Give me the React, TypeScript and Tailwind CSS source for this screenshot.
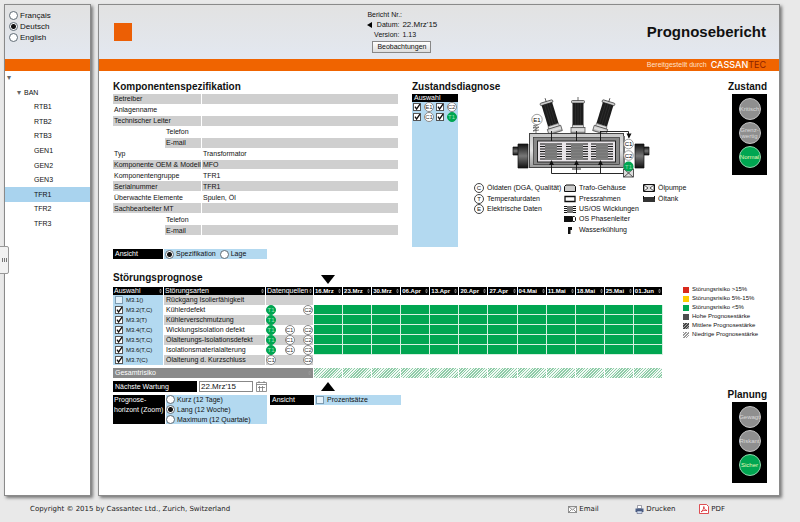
import type { ReactNode } from 'react'

const specRows = [
  { label: 'Betreiber', value: '' },
  { label: 'Anlagenname', value: '' },
  { label: 'Technischer Leiter', value: '' },
  { label: 'Telefon', value: '', sub: true },
  { label: 'E-mail', value: '', sub: true },
  { label: 'Typ', value: 'Transformator' },
  { label: 'Komponente OEM & Modell', value: 'MFO' },
  { label: 'Komponentengruppe', value: 'TFR1' },
  { label: 'Serialnummer', value: 'TFR1' },
  { label: 'Überwachte Elemente', value: 'Spulen, Öl' },
  { label: 'Sachbearbeiter MT', value: '' },
  { label: 'Telefon', value: '', sub: true },
  { label: 'E-mail', value: '', sub: true },
]

const faults = [
  { id: 'M3.1()', name: 'Rückgang Isolierfähigkeit', sources: ['', '', ''], checked: false, green: false },
  { id: 'M3.2(T,C)', name: 'Kühlerdefekt', sources: ['T1', '', 'C2'], checked: true, green: true },
  { id: 'M3.3(T)', name: 'Kühlerverschmutzung', sources: ['T1', '', ''], checked: true, green: true },
  { id: 'M3.4(T,C)', name: 'Wicklungsisolation defekt', sources: ['T1', 'C1', 'C2'], checked: true, green: true },
  { id: 'M3.5(T,C)', name: 'Ölalterungs-Isolationsdefekt', sources: ['T1', 'C1', 'C2'], checked: true, green: true },
  { id: 'M3.6(T,C)', name: 'Isolationsmaterialalterung', sources: ['T1', 'C1', 'C2'], checked: true, green: true },
  { id: 'M3.7(C)', name: 'Ölalterung d. Kurzschluss', sources: ['C1', '', 'C2'], checked: true, green: false },
]

const weeks = ['16.Mrz', '23.Mrz', '30.Mrz', '06.Apr', '13.Apr', '20.Apr', '27.Apr', '04.Mai', '11.Mai', '18.Mai', '25.Mai', '01.Jun']

const riskLegend = [
  { label: 'Störungsrisiko >15%', swatch: 'bg-[#d9291c]' },
  { label: 'Störungsrisiko 5%-15%', swatch: 'bg-[#fc0]' },
  { label: 'Störungsrisiko <5%', swatch: 'bg-[#00a651]' },
  { label: 'Hohe Prognosestärke', swatch: 'bg-[#4d4d4f]' },
  { label: 'Mittlere Prognosestärke', swatch: 'bg-[repeating-linear-gradient(135deg,#444_0_1px,#aaa_1px_2px)]' },
  { label: 'Niedrige Prognosestärke', swatch: 'bg-[repeating-linear-gradient(135deg,#999_0_1px,#fff_1px_2px)]' },
]

const components = ['RTB1', 'RTB2', 'RTB3', 'GEN1', 'GEN2', 'GEN3', 'TFR1', 'TFR2', 'TFR3']

function Check({ label, checked, children }: { label?: string; checked?: boolean; children?: ReactNode }) {
  return (
    <label className="flex items-center gap-[3px] whitespace-nowrap">
      <span className="relative block size-2">
        <input
          type="checkbox"
          aria-label={label}
          defaultChecked={checked}
          className="peer block size-2 appearance-none border border-[#7d9bb0] bg-[#e4f2fb] checked:border-[#555] checked:bg-white"
        />
        <svg viewBox="0 0 8 8" className="pointer-events-none absolute inset-0 hidden size-2 peer-checked:block">
          <path d="M2 3.6 3.6 6 7 1.2" fill="none" stroke="#111" strokeWidth="1.3" />
        </svg>
      </span>
      {children}
    </label>
  )
}

function Radio({ name, label, checked }: { name: string; label: string; checked?: boolean }) {
  return (
    <label className="flex items-center gap-[2px] whitespace-nowrap">
      <input
        type="radio"
        name={name}
        defaultChecked={checked}
        className="block size-[9px] shrink-0 appearance-none rounded-full border border-[#5f6b75] bg-white checked:bg-[radial-gradient(circle,#111_0_2px,#fff_3px)]"
      />
      {label}
    </label>
  )
}

function Source({ code }: { code: string }) {
  if (!code) return <span className="size-[10px]" />
  const tone = code.startsWith('T') ? 'border-[#00a651] bg-[#00a651] text-[#9be0b8]' : 'border-[#888] bg-white text-[#333]'
  return (
    <span className={`flex size-[10px] items-center justify-center rounded-full border text-[6px] leading-none ${tone}`}>
      {code}
    </span>
  )
}

function SortIcon() {
  return (
    <svg viewBox="0 0 4 6" className="h-[6px] w-[3px] shrink-0 fill-[#999]">
      <path d="M0 2.4 2 0l2 2.4zM0 3.6h4L2 6z" />
    </svg>
  )
}

function SortHead({ children }: { children: ReactNode }) {
  return (
    <th className="h-2 border-r border-white bg-black p-0 font-normal text-white">
      <button type="button" className="flex h-2 w-full items-center justify-between px-px leading-[8px] whitespace-nowrap">
        {children}
        <SortIcon />
      </button>
    </th>
  )
}

function TrafficLight({ title, lamps }: { title: string; lamps: string[] }) {
  return (
    <section className="flex flex-col items-end">
      <h2 className="text-[10px] leading-[14px] font-bold">{title}</h2>
      <div className="flex h-[81px] w-[35px] flex-col items-center gap-[2px] bg-black pt-1">
        {lamps.map((lamp, i) => (
          <div
            key={lamp}
            className={`flex size-[22px] items-center justify-center rounded-full border text-center text-[6px] leading-[6px] whitespace-pre-line ${
              i === 2 ? 'border-[#8fd6ac] bg-[#00a651] text-[#e4f8b8]' : 'border-[#c4c4c4] bg-[#8f8f8f] text-[#dadada]'
            }`}
          >
            {lamp}
          </div>
        ))}
      </div>
    </section>
  )
}

function Bushing({ transform }: { transform: string }) {
  return (
    <g transform={transform}>
      <path d="M0-27v6" stroke="#444" strokeWidth=".8" />
      <rect x="-6.5" y="-23.5" width="13" height="2.6" rx="1" fill="#ccc" stroke="#333" strokeWidth=".7" />
      <rect x="-5.5" y="-21" width="11" height="22" fill="#1c1c1c" />
      <path d="M-2.5-21v22M0-21v22M2.5-21v22" stroke="#383838" strokeWidth=".5" />
      <rect x="-5.5" y="1" width="11" height="3" fill="#ddd" stroke="#444" strokeWidth=".6" />
      <rect x="-7" y="3.5" width="14" height="5.5" fill="url(#metal)" stroke="#444" strokeWidth=".7" />
    </g>
  )
}

function Winding({ x }: { x: number }) {
  return (
    <g>
      <rect x={x} y="52.5" width="24" height="18.5" fill="#e8e4e8" />
      {[54, 56.5, 59, 61.5, 64, 66.5, 69].map((y) => (
        <path key={y} d={`M${x + 1} ${y}h22`} stroke="#1a1a1a" strokeWidth="1.1" />
      ))}
      <rect x={x + 6} y="53" width="12" height="17" fill="#808080" />
      {[55, 58, 61, 64, 67].map((y) => (
        <path key={y} d={`M${x + 6} ${y}h12`} stroke="#666" strokeWidth=".6" />
      ))}
    </g>
  )
}

function TransformerDrawing() {
  return (
    <svg viewBox="0 4 150 86" width="150" height="86" className="block" fontFamily="Liberation Sans, sans-serif" fontSize="6">
      <defs>
        <linearGradient id="metal" x1="0" x2="0" y1="0" y2="1">
          <stop offset="0" stopColor="#c8c8c8" />
          <stop offset=".5" stopColor="#e2e2e2" />
          <stop offset="1" stopColor="#9a9a9a" />
        </linearGradient>
        <linearGradient id="wheel" x1="0" x2="0" y1="0" y2="1">
          <stop offset="0" stopColor="#111" />
          <stop offset=".5" stopColor="#777" />
          <stop offset="1" stopColor="#111" />
        </linearGradient>
      </defs>
      <path d="M8 57h6v8H8zM136 57h8v8h-8z" fill="url(#wheel)" stroke="#111" strokeWidth=".7" />
      <path d="M13 54h10v24H13zM130 54h9v24h-9z" fill="url(#wheel)" stroke="#111" strokeWidth=".7" />
      <Bushing transform="translate(48 34) rotate(-17)" />
      <Bushing transform="translate(73 34)" />
      <Bushing transform="translate(97 34) rotate(17)" />
      <rect x="24.5" y="43.5" width="94" height="34" fill="url(#metal)" stroke="#444" />
      <rect x="28.5" y="47.5" width="86" height="27" fill="#888" stroke="#333" strokeWidth=".7" />
      <rect x="32.5" y="51" width="78" height="21" fill="#e8e4e8" stroke="#222" />
      <Winding x={34} />
      <Winding x={60} />
      <Winding x={85} />
      <path d="M46.5 41v10M71.5 41v10M95.5 41v10M95.5 41.5h28v6M46.5 72v11.5H119M71.5 72v11.5M95.5 72v11.5M67 79h9" fill="none" stroke="#111" strokeWidth=".9" />
      <path d="m46.5 70-2.5 5h5zM71.5 70l-2.5 5h5zM95.5 70l-2.5 5h5zM124 48.5l-2.5-5h5z" fill="#111" />
      <path d="M119 46v32" stroke="#777" strokeWidth="2" />
      <path d="m28 36 6-2-6 4 6-1-6 4 6-1M31 38v6" fill="none" stroke="#444" strokeWidth=".7" />
      <rect x="118.5" y="79" width="10" height="8" fill="#ddd" stroke="#333" strokeWidth=".8" />
      <path d="m119 79 9 8M128 79l-9 8" stroke="#333" strokeWidth=".8" />
      <g textAnchor="middle">
        <g fill="#fff" stroke="#777" strokeWidth=".7">
          <circle cx="32" cy="29.5" r="5.2" />
          <circle cx="123.5" cy="54" r="4.8" />
          <circle cx="123.5" cy="65.5" r="4.8" />
        </g>
        <circle cx="123.5" cy="76.5" r="5" fill="#00a651" />
        <text x="32" y="31.7">E1</text>
        <text x="123.5" y="56">C1</text>
        <text x="123.5" y="67.5">C2</text>
        <text x="123.5" y="78.5" fill="#8fd6ac">T1</text>
      </g>
    </svg>
  )
}

function LetterMark({ letter }: { letter: string }) {
  return (
    <span className="flex size-[10px] items-center justify-center rounded-full border border-[#444] text-[6px] leading-none">{letter}</span>
  )
}

function Symbol({ children }: { children: ReactNode }) {
  return (
    <svg viewBox="0 0 12 8" className="h-2 w-3" fill="none" stroke="#111">
      {children}
    </svg>
  )
}

function DiagramLegend() {
  const items: [string, ReactNode, string][] = [
    ['col-start-1 row-start-1', <LetterMark letter="C" />, 'Öldaten (DGA, Qualität)'],
    ['col-start-1 row-start-2', <LetterMark letter="T" />, 'Temperaturdaten'],
    ['col-start-1 row-start-3', <LetterMark letter="E" />, 'Elektrische Daten'],
    ['col-start-2 row-start-1', <Symbol><path d="M.5 7.5V2.5L2 1h8l1.5 1.5v5z" fill="#ccc" /></Symbol>, 'Trafo-Gehäuse'],
    ['col-start-2 row-start-2', <Symbol><path d="M1 1.5h10v5H1z" strokeWidth="1.3" /></Symbol>, 'Pressrahmen'],
    ['col-start-2 row-start-3', <Symbol><path d="M0 1.5h12M0 3.5h12M0 5.5h12M0 7.5h12" /><path d="M3 1h6v7H3z" fill="#777" stroke="none" /></Symbol>, 'US/OS Wicklungen'],
    ['col-start-2 row-start-4', <Symbol><path d="M0 1h8v6H0z" fill="#111" stroke="none" /><path d="M8.5 1.5h2l1 1v3l-1 1h-2z" /></Symbol>, 'OS Phasenleiter'],
    ['col-start-2 row-start-5', <Symbol><path d="M4 1h4v3H6.5v4H4z" fill="#111" stroke="none" /></Symbol>, 'Wasserkühlung'],
    ['col-start-3 row-start-1', <Symbol><path d="M.5.5h11v7H.5z" fill="#ddd" /><path d="m1 1 4 3-4 3zM11 1 7 4l4 3z" fill="#fff" strokeWidth=".7" /></Symbol>, 'Ölpumpe'],
    ['col-start-3 row-start-2', <Symbol><path d="M0 2h12v5H0z" fill="#333" stroke="none" /><path d="M.5 1v3M11.5 1v3" /></Symbol>, 'Öltank'],
  ]
  return (
    <ul className="mt-[3px] grid h-[52px] grid-cols-[90px_79px_auto] grid-rows-5 items-center justify-start">
      {items.map(([place, icon, label]) => (
        <li key={label} className={`flex items-center gap-[3px] leading-[10px] whitespace-nowrap ${place}`}>
          {icon}
          {label}
        </li>
      ))}
    </ul>
  )
}

function Sidebar() {
  return (
    <aside className="relative w-[87px] shrink-0 border border-[#8a8a8a] bg-white shadow-[2px_2px_3px_#777]">
      <fieldset className="flex h-[54px] flex-col gap-[2px] bg-linear-to-b from-[#e2e2e2] to-[#e3e8f0] pt-[6px] pl-[4px] text-[8px] leading-[9px]">
        <Radio name="lang" label="Français" />
        <Radio name="lang" label="Deutsch" checked />
        <Radio name="lang" label="English" />
      </fieldset>
      <div className="h-3 bg-[#f06400]" />
      <ul className="grid h-[160px] auto-rows-fr items-stretch text-[7px] leading-[10px]">
        <li className="flex items-center pl-[2px] text-[8px] text-[#666]">▾</li>
        <li className="flex items-center gap-[3px] pl-[12px]">
          <span className="text-[8px] text-[#666]">▾</span>BAN
        </li>
        {components.map((name) => (
          <li key={name} className={`flex ${name === 'TFR1' ? 'bg-[#a9d3ee]' : ''}`}>
            <a href={`#${name}`} className="flex w-full items-center pl-[29px]">{name}</a>
          </li>
        ))}
      </ul>
      <button
        type="button"
        aria-label="Navigation einklappen"
        className="absolute top-[241px] -left-[6px] flex h-7 w-[10px] items-center justify-center gap-px rounded-r-xs border border-[#999] bg-[#f2f2f2]"
      >
        <span className="h-1 w-px bg-[#777]" />
        <span className="h-1 w-px bg-[#777]" />
        <span className="h-1 w-px bg-[#777]" />
      </button>
    </aside>
  )
}

function ReportHeader() {
  return (
    <header>
      <div className="flex h-[54px] justify-between bg-linear-to-b from-[#e2e2e2] to-[#e3e8f0] pr-[13px] pl-[15px]">
        <div className="mt-[18px] size-[18px] bg-[#ec5f05]" />
        <div className="ml-10 w-[84px] pt-[5px]">
          <dl className="grid grid-cols-[32px_auto] gap-x-[3px] leading-[10px] whitespace-nowrap">
            <dt className="text-right">Bericht Nr.:</dt>
            <dd />
            <dt className="flex items-center justify-between">
              <button type="button" aria-label="Vorheriger Bericht">
                <svg viewBox="0 0 5 6" className="h-[6px] w-[5px]"><path d="M5 0v6L0 3z" /></svg>
              </button>
              Datum:
            </dt>
            <dd className="text-[8px]">22.Mrz'15</dd>
            <dt className="text-right">Version:</dt>
            <dd>1.13</dd>
          </dl>
          <button type="button" className="mt-px ml-[5px] h-[12px] w-[59px] border border-[#888] bg-linear-to-b from-white to-[#ddd] leading-[10px]">
            Beobachtungen
          </button>
        </div>
        <h1 className="mt-[18px] text-[15px] leading-[18px] font-bold">Prognosebericht</h1>
      </div>
      <div className="flex h-3 items-center justify-end gap-1 bg-[#f06400] pr-[13px] text-white">
        <span className="text-[#ffe0c8]">Bereitgestellt durch</span>
        <span className="font-[Inter] text-[9px] leading-[10px] font-medium">
          CASSAN<span className="font-normal text-[#8c2300]">TEC</span>
        </span>
      </div>
    </header>
  )
}

function SpecSection() {
  return (
    <section className="w-[285px]">
      <h2 className="text-[10px] leading-[14px] font-bold">Komponentenspezifikation</h2>
      <table className="h-[142px] w-full table-fixed border-separate border-spacing-0">
        <colgroup>
          <col className="w-[52px]" />
          <col className="w-[36px]" />
          <col />
        </colgroup>
        <tbody>
          {specRows.map((row, i) => {
            const cell = `border-b border-white p-0 pl-px text-left font-normal whitespace-nowrap leading-[9px] ${i % 2 === 0 ? 'bg-[#cfcfcf]' : ''}`
            return (
              <tr key={i}>
                {row.sub && <td />}
                <th scope="row" colSpan={row.sub ? 1 : 2} className={cell}>{row.label}</th>
                <td className={`border-l ${cell}`}>{row.value}</td>
              </tr>
            )
          })}
        </tbody>
      </table>
      <fieldset className="mt-[13px] flex h-[10px] w-[154px] gap-px leading-[10px]">
        <div className="w-[50px] bg-black pl-[2px] text-white">Ansicht</div>
        <div className="flex flex-1 items-center gap-1 bg-[#b3d9f0] pl-px">
          <Radio name="view" label="Spezifikation" checked />
          <Radio name="view" label="Lage" />
        </div>
      </fieldset>
    </section>
  )
}

function DiagnosisSection() {
  return (
    <section className="flex-1 pl-[14px]">
      <h2 className="text-[10px] leading-[14px] font-bold">Zustandsdiagnose</h2>
      <div className="flex">
        <fieldset className="h-[153px] w-[46px] bg-[#b3d9f0]">
          <div className="h-[8px] bg-black pl-[2px] leading-[8px] text-white">Auswahl</div>
          <div className="grid grid-cols-2 pl-px">
            {['E1', 'C2', 'C1', 'T1'].map((code) => (
              <Check key={code} label={code} checked>
                <Source code={code} />
              </Check>
            ))}
          </div>
        </fieldset>
        <div className="pl-4">
          <div className="pl-[31px]">
            <TransformerDrawing />
          </div>
          <DiagramLegend />
        </div>
      </div>
    </section>
  )
}

function ForecastTable() {
  return (
    <table className="w-full table-fixed border-separate border-spacing-0">
      <colgroup>
        <col className="w-[51px]" />
        <col className="w-[102px]" />
        <col className="w-[48px]" />
        {weeks.map((week) => <col key={week} />)}
      </colgroup>
      <thead>
        <tr>
          <SortHead>Auswahl</SortHead>
          <SortHead>Störungsarten</SortHead>
          <SortHead>Datenquellen</SortHead>
          {weeks.map((week) => (
            <SortHead key={week}><b className="text-[6px]">{week}</b></SortHead>
          ))}
        </tr>
      </thead>
      <tbody>
        {faults.map((fault, i) => {
          const stripe = i % 2 === 0 ? 'bg-[#cfcfcf]' : ''
          return (
            <tr key={fault.id}>
              <td className="h-[10px] border-r border-white bg-[#b3d9f0] p-0 pl-[2px] text-[6px] leading-[10px]">
                <Check checked={fault.checked}>{fault.id}</Check>
              </td>
              <td className={`h-[10px] border-r border-white p-0 pl-[2px] leading-[10px] whitespace-nowrap ${stripe}`}>{fault.name}</td>
              <td className={`h-[10px] border-r border-white p-0 ${stripe}`}>
                <div className="flex justify-between">
                  {fault.sources.map((code, j) => <Source key={j} code={code} />)}
                </div>
              </td>
              {weeks.map((week) => (
                <td key={week} className={`h-[10px] border-r border-b p-0 ${fault.green ? 'border-[#d5f0e0] bg-[#00a651]' : 'border-white'}`} />
              ))}
            </tr>
          )
        })}
        <tr>
          <th scope="row" colSpan={3} className="border-t-3 border-r border-white bg-[#8a8a8a] p-0 font-normal text-white">
            <div className="flex h-[10px] items-center justify-between px-[2px] leading-[10px]">
              Gesamtrisiko
              <SortIcon />
            </div>
          </th>
          {weeks.map((week) => (
            <td key={week} className="border-t-3 border-r border-white bg-[repeating-linear-gradient(135deg,#8fcca8_0_1px,#f2faf5_1px_2px)] p-0" />
          ))}
        </tr>
      </tbody>
    </table>
  )
}

function ForecastSection() {
  return (
    <section className="flex-1">
      <div className="flex h-4 items-start">
        <h2 className="w-[208px] text-[10px] leading-[14px] font-bold">Störungsprognose</h2>
        <svg viewBox="0 0 14 9" className="mt-[4px] h-[9px] w-[14px]"><path d="M0 0h14L7 9z" /></svg>
      </div>
      <ForecastTable />
      <div className="mt-[3px] flex h-[11px] items-center">
        <label htmlFor="next" className="h-[11px] w-[84px] bg-black pl-[2px] leading-[11px] text-white">Nächste Wartung</label>
        <input id="next" defaultValue="22.Mrz'15" className="ml-[2px] h-[11px] w-[54px] border border-[#888] bg-white px-px text-[8px] leading-[9px]" />
        <button type="button" aria-label="Kalender" className="ml-[3px]">
          <svg viewBox="0 0 11 11" className="size-[11px]" fill="none" stroke="#777">
            <path d="M.5 1.5h10v9H.5zM.5 3.5h10M3.5 5v5M6.5 5v5M2 6.5h7M3 0v2M8 0v2" strokeWidth=".8" />
          </svg>
        </button>
        <svg viewBox="0 0 14 9" className="ml-[54px] h-[9px] w-[14px]"><path d="M0 9h14L7 0z" /></svg>
      </div>
      <div className="mt-[3px] flex items-start gap-[3px]">
        <fieldset className="flex h-[29px] w-[154px] gap-px">
          <div className="w-[52px] bg-black pl-px leading-[10px] whitespace-nowrap text-white">Prognose-<br />horizont (Zoom)</div>
          <div className="flex flex-1 flex-col justify-between bg-[#b3d9f0] leading-[9px]">
            <Radio name="horizon" label="Kurz (12 Tage)" />
            <Radio name="horizon" label="Lang (12 Woche)" checked />
            <Radio name="horizon" label="Maximum (12 Quartale)" />
          </div>
        </fieldset>
        <fieldset className="flex h-[10px] w-[131px] gap-px leading-[10px]">
          <div className="w-[44px] bg-black pl-[2px] text-white">Ansicht</div>
          <div className="flex flex-1 items-center bg-[#b3d9f0] pl-px">
            <Check>Prozentsätze</Check>
          </div>
        </fieldset>
      </div>
    </section>
  )
}

function Footer() {
  return (
    <footer className="flex items-center pt-[7px] pr-[75px] pl-[30px] font-['DejaVu_Sans'] text-[7px] leading-[12px] text-[#222]">
      <p className="flex-1">Copyright © 2015 by Cassantec Ltd., Zurich, Switzerland</p>
      <nav className="flex">
        <a href="#email" className="flex w-[67px] items-center gap-[2px]">
          <svg viewBox="0 0 9 7" className="h-[7px] w-[9px]" fill="#fff" stroke="#666" strokeWidth=".7">
            <path d="M.5.5h8v6h-8zM.5.5l4 3.5 4-3.5M.5 6.5l3-3M8.5 6.5l-3-3" />
          </svg>
          Email
        </a>
        <a href="#drucken" className="flex w-[64px] items-center gap-[2px]">
          <svg viewBox="0 0 9 9" className="size-[9px]">
            <path d="M2.5.5h4v3h-4z" fill="#fff" stroke="#667" strokeWidth=".6" />
            <path d="M.5 3.5h8V7h-8z" fill="#4a5f86" />
            <path d="M2 6h5v2.5H2z" fill="#cfe0f5" stroke="#446" strokeWidth=".5" />
          </svg>
          Drucken
        </a>
        <a href="#pdf" className="flex items-center gap-[2px]">
          <svg viewBox="0 0 10 10" className="size-[10px]" fill="#fff" stroke="#d8232a" strokeWidth=".8">
            <path d="M.5.5h7l2 2v7h-9z" />
            <path d="M2 8c1.5-1 3-3.5 2.800-5.500C5 5 6.5 6.500 8 6.500 6 6 3.500 6.500 2 8z" />
          </svg>
          PDF
        </a>
      </nav>
    </footer>
  )
}

export default function App() {
  return (
    <div className="min-h-screen bg-[#e9e9e9] pt-1 font-['Liberation_Sans',sans-serif] text-[7px] leading-[10px] text-[#111]">
      <div className="flex gap-[7px] pr-5 pl-1">
        <Sidebar />
        <main className="min-h-[492px] flex-1 border border-[#8a8a8a] bg-white shadow-[2px_2px_3px_#777]">
          <ReportHeader />
          <div className="pt-[9px] pr-[12px] pl-[14px]">
            <div className="flex">
              <SpecSection />
              <DiagnosisSection />
              <TrafficLight title="Zustand" lamps={['Kritisch', 'Grenz-\nwertig', 'Normal']} />
            </div>
            <div className="mt-[12px] flex gap-5">
              <ForecastSection />
              <div className="w-[84px] pt-[14px]">
                <ul className="text-[6px] leading-[9px] whitespace-nowrap">
                  {riskLegend.map((item) => (
                    <li key={item.label} className="flex items-center gap-[3px]">
                      <span className={`size-[6px] ${item.swatch}`} />
                      {item.label}
                    </li>
                  ))}
                </ul>
                <div className="mt-[49px]">
                  <TrafficLight title="Planung" lamps={['Gewagt', 'Riskant', 'Sicher']} />
                </div>
              </div>
            </div>
          </div>
        </main>
      </div>
      <Footer />
    </div>
  )
}
